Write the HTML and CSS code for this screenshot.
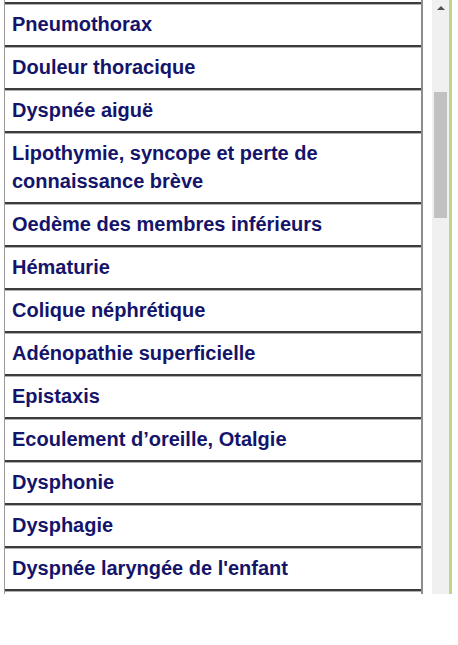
FILE: index.html
```html
<!DOCTYPE html>
<html lang="fr">
<head>
<meta charset="utf-8">
<title>Liste</title>
<link rel="stylesheet" href="styles.css">
</head>
<body>
<div class="frame">
  <div class="viewport">
    <ul class="list">
      <li class="row">Pneumothorax</li>
      <li class="row">Douleur thoracique</li>
      <li class="row">Dyspnée aiguë</li>
      <li class="row">Lipothymie, syncope et perte de connaissance brève</li>
      <li class="row">Oedème des membres inférieurs</li>
      <li class="row">Hématurie</li>
      <li class="row">Colique néphrétique</li>
      <li class="row">Adénopathie superficielle</li>
      <li class="row">Epistaxis</li>
      <li class="row">Ecoulement d’oreille, Otalgie</li>
      <li class="row">Dysphonie</li>
      <li class="row">Dysphagie</li>
      <li class="row">Dyspnée laryngée de l'enfant</li>
      <li class="row row-empty"></li>
    </ul>
  </div>
  <div class="scrollbar">
    <div class="arrow"></div>
    <div class="track-top"></div>
    <div class="thumb"></div>
  </div>
  <div class="edge"></div>
</div>
</body>
</html>
```
FILE: styles.css
```css
html, body {
  margin: 0;
  padding: 0;
  background: #ffffff;
}
.frame {
  display: flex;
  width: 452px;
  height: 594px;
  overflow: hidden;
}
.viewport {
  width: 432px;
  height: 594px;
  overflow: hidden;
  flex: none;
}
.list {
  list-style: none;
  margin: 0 0 0 4px;
  padding: 2px 0 0 0;
  width: 416px;
  border-left: 1px solid #9a9a9a;
  border-right: 2px solid #8c8c8c;
  font-family: "Liberation Sans", Arial, sans-serif;
  font-weight: bold;
  font-size: 20px;
  line-height: 28px;
  color: #14146a;
}
.row {
  border-top: 2px solid #3c3c3c;
  box-shadow: inset 0 1px 0 #b0b0b0;
  padding: 6px 8px 7px 7px;
}
.row-empty {
  height: 28px;
}
.scrollbar {
  width: 17px;
  height: 594px;
  background: #f0f0f0;
  display: flex;
  flex-direction: column;
  align-items: center;
  flex: none;
}
.arrow {
  width: 0;
  height: 0;
  margin-top: 6px;
  border-left: 4px solid transparent;
  border-right: 4px solid transparent;
  border-bottom: 4px solid #505050;
}
.track-top {
  height: 82px;
}
.thumb {
  width: 13px;
  height: 126px;
  background: #c1c1c1;
}
.edge {
  width: 3px;
  height: 594px;
  background: #c2d682;
  flex: none;
}
```
